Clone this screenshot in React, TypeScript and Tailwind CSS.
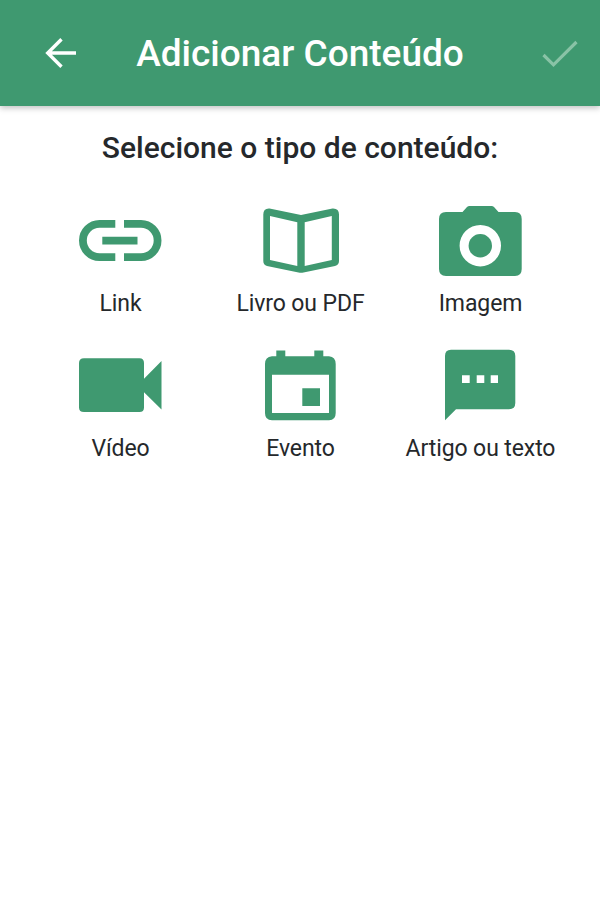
import type { ReactNode } from "react";

type Item = { label: string; icon: ReactNode };

const items: Item[] = [
  {
    label: "Link",
    icon: (
      <>
        <path d="M43.3 23.9H27.5a16.6 16.6 0 0 0 0 33.2H43.3M52 23.9H69a16.6 16.6 0 0 1 0 33.2H52" fill="none" stroke="currentColor" strokeWidth="7.8" />
        <path d="M30.3 36.7h35.2v7.8H30.3z" />
      </>
    ),
  },
  {
    label: "Livro ou PDF",
    icon: (
      <path
        fillRule="evenodd"
        d="M11.3 14.5Q11.3 8 17.5 8.4L49 15 80.5 8.4Q87 8 87 14.5V61Q87 65 83 66L51.5 72.4Q49 73 46.5 72.4L15 66Q11.3 65 11.3 61ZM18 16V60L45.3 66V22.3ZM52.7 22.3V66L79.8 60V16Z"
      />
    ),
  },
  {
    label: "Imagem",
    icon: (
      <>
        <path
          fillRule="evenodd"
          d="M14 12H30.5L35 7Q36 6 37.5 6H59.5Q61 6 62 7L66.5 12H83Q89.7 12 89.7 19V69Q89.7 76 83 76H14Q7 76 7 69V19Q7 12 14 12ZM48.3 25a20.7 20.7 0 1 0 0 41.4a20.7 20.7 0 1 0 0-41.4Z"
        />
        <circle cx="48.3" cy="45.7" r="11.7" />
      </>
    ),
  },
  {
    label: "Vídeo",
    icon: <path d="M12 13.3H67.5Q72 13.3 72 18V33.7L89.5 16V64.5L72 47.3V62.5Q72 67 67.5 67H12Q7 67 7 62.5V18Q7 13.3 12 13.3Z" />,
  },
  {
    label: "Evento",
    icon: (
      <path
        fillRule="evenodd"
        d="M24.3 5.5h9v5.8h29V5.5h9v5.8H77Q83.7 12 83.7 19V68Q83.7 75.3 77 75.3H20Q13 75.3 13 68V19Q13 12 20 11.3H24.3ZM20 29.7V68H77V29.7ZM50.3 43.3H68V61H50.3Z"
      />
    ),
  },
  {
    label: "Artigo ou texto",
    icon: (
      <path
        fillRule="evenodd"
        d="M19 4.8H77Q83.3 4.8 83.3 11V58Q83.3 64.2 77 64.2H24L13 75.3V11Q13 4.8 19 4.8ZM30 30.3V38h7.7V30.3ZM44.7 30.3V38h7.6V30.3ZM58.7 30.3V38h7.3V30.3Z"
      />
    ),
  },
];

export default function App() {
  return (
    <main className="h-[900px] w-[600px] overflow-hidden bg-white font-[Roboto,sans-serif] text-[#25282b]">
      <header className="grid h-[105.5px] grid-cols-[100px_400px_100px] items-center bg-[#3f9970] text-white shadow-[0_2px_6px_rgba(0,0,0,0.25)]">
        <svg className="ml-[43px] h-9 w-9" viewBox="0 0 36 36" fill="none" stroke="currentColor" strokeWidth="3.4">
          <path d="M33 18H5M18.5 4.2L4.7 18L18.5 31.8" />
        </svg>
        <h1 className="pt-px text-center text-[37px] leading-none font-medium whitespace-nowrap">Adicionar Conteúdo</h1>
        <svg className="ml-[42px] h-9 w-9 text-[#89c3a6]" viewBox="0 0 36 36" fill="none" stroke="currentColor" strokeWidth="3.2">
          <path d="M1.5 20L11.5 29.8L34.5 7" />
        </svg>
      </header>
      <h2 className="mt-[24px] text-center text-[30px] leading-9 font-medium whitespace-nowrap">Selecione o tipo de conteúdo:</h2>
      <section className="mt-[34.5px] grid grid-cols-3 px-[30px]">
        {items.map((item) => (
          <div key={item.label} className="flex h-[145px] flex-col items-center">
            <svg className="h-[84px] w-24 shrink-0 text-[#3f9970]" viewBox="0 0 96 84" fill="currentColor">
              {item.icon}
            </svg>
            <span className="mt-[5px] pl-px text-[23px] leading-[30px] tracking-[-0.1px] whitespace-nowrap">{item.label}</span>
          </div>
        ))}
      </section>
    </main>
  );
}
